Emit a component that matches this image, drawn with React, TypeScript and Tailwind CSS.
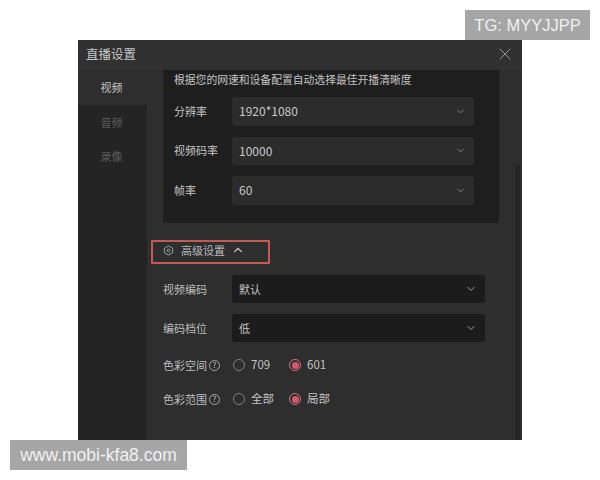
import { ChevronDown, ChevronUp, X } from "lucide-react";

const font = "font-['Noto_Sans_CJK_SC','Liberation_Sans',sans-serif]";

function DarkSelect({ label, value }: { label: string; value: string }) {
  return (
    <div className="flex items-center">
      <div className="w-[69px] pl-[11px] text-[11px] leading-none text-[#c4c4c4] whitespace-nowrap">{label}</div>
      <div className="flex h-[28.5px] w-[242px] items-center justify-between rounded-[3px] bg-[#2c2c2c] pl-[7px] pr-[8px] text-[12px] text-[#c8c8c8]">
        <span>{value}</span>
        <ChevronDown size={11} className="text-[#8a8a8a]" />
      </div>
    </div>
  );
}

function AdvancedSelect({ label, value }: { label: string; value: string }) {
  return (
    <div className="flex items-center">
      <div className="w-[69px] text-[11px] leading-none text-[#bdbdbd] whitespace-nowrap">{label}</div>
      <div className="flex h-[28px] w-[253px] items-center justify-between rounded-[3px] bg-[#1c1c1c] pl-[7px] pr-[8px] text-[11px] text-[#c4c4c4]">
        <span>{value}</span>
        <ChevronDown size={12} className="text-[#a0a0a0]" />
      </div>
    </div>
  );
}

function Radio({ label, checked }: { label: string; checked?: boolean }) {
  return (
    <div className="flex w-[56px] items-center gap-[6px] text-[11.5px] leading-none text-[#c4c4c4]">
      {checked ? (
        <span className="flex size-[12px] items-center justify-center rounded-full border border-[#d9707f]">
          <span className="size-[7px] rounded-full bg-[#d9576b]" />
        </span>
      ) : (
        <span className="size-[12px] rounded-full border border-[#808080]" />
      )}
      <span>{label}</span>
    </div>
  );
}

function RadioRow({ label, options }: { label: string; options: [string, string] }) {
  return (
    <div className="flex items-center">
      <div className="flex w-[70px] items-center gap-[2px] text-[11px] leading-none text-[#bdbdbd] whitespace-nowrap">
        <span>{label}</span>
        <span className="flex size-[11px] items-center justify-center rounded-full border border-[#a8a8a8] text-[8px] leading-none">?</span>
      </div>
      <Radio label={options[0]} />
      <Radio label={options[1]} checked />
    </div>
  );
}

export default function App() {
  return (
    <div className={`relative h-[480px] w-[600px] overflow-hidden bg-white pl-[78px] pt-[40px] ${font}`}>
      <div className="flex h-[400px] w-[444px] flex-col bg-[#2e2e2e]">
        <div className="flex h-[30px] shrink-0 items-center justify-between bg-[#313131] pb-[2px] pl-[8px] pr-[7px] text-[12.5px] text-[#c8c8c8]">
          <span>直播设置</span>
          <X size={20} strokeWidth={0.9} className="text-[#b5b5b5]" />
        </div>
        <div className="flex min-h-0 flex-1">
          <div className="w-[69px] shrink-0 bg-[#242424] text-center text-[11px]">
            <div className="flex h-[35px] items-center justify-center bg-[#2e2e2e] pr-[2px] text-[#c4c4c4]">视频</div>
            <div className="flex h-[34px] items-center justify-center pr-[2px] text-[#5c5c5c]">音频</div>
            <div className="flex h-[34px] items-center justify-center pr-[2px] text-[#5c5c5c]">录像</div>
          </div>
          <div className="relative flex-1 pl-[16px]">
            <div className="flex h-[153px] w-[336px] flex-col rounded-b-[3px] bg-[#1e1e1e]">
              <div className="h-[27px] pl-[11px] text-[10.8px] leading-[18px] text-[#c4c4c4]">根据您的网速和设备配置自动选择最佳开播清晰度</div>
              <div className="flex flex-col gap-[11px]">
                <DarkSelect label="分辨率" value="1920*1080" />
                <DarkSelect label="视频码率" value="10000" />
                <DarkSelect label="帧率" value="60" />
              </div>
            </div>
            <div className="-ml-[12px] mt-[17px] flex h-[24px] w-[119px] items-center rounded-[1px] border-2 border-[#c25a55] pb-[4px] pl-[10px] text-[11px] text-[#b8b8b8]">
              <svg width="11" height="11" viewBox="0 0 12 12" fill="none" stroke="#a5a5a5" strokeWidth="1">
                <path d="M6 1l4.5 2.5v5L6 11 1.5 8.5v-5z" />
                <circle cx="6" cy="6" r="1.5" />
              </svg>
              <span className="ml-[7px]">高级设置</span>
              <ChevronUp size={14} className="ml-[6px] text-[#b8b8b8]" />
            </div>
            <div className="mt-[11px] flex flex-col gap-[11px]">
              <AdvancedSelect label="视频编码" value="默认" />
              <AdvancedSelect label="编码档位" value="低" />
            </div>
            <div className="mt-[17px] flex flex-col gap-[22px]">
              <RadioRow label="色彩空间" options={["709", "601"]} />
              <RadioRow label="色彩范围" options={["全部", "局部"]} />
            </div>
            <div className="absolute bottom-0 right-[2px] top-[95px] w-[5px] bg-[#262626]" />
          </div>
        </div>
      </div>
      <div className="absolute left-[465px] top-[10px] flex h-[30px] w-[125px] items-center justify-center bg-[#a6a6a6] font-['Liberation_Sans',sans-serif] text-[16.5px] text-[#f0f0f0]">TG: MYYJJPP</div>
      <div className="absolute left-[10px] top-[440px] flex h-[30px] w-[177px] items-center justify-center bg-[#a6a6a6] font-['Liberation_Sans',sans-serif] text-[17.5px] text-[#f0f0f0]">www.mobi-kfa8.com</div>
    </div>
  );
}
